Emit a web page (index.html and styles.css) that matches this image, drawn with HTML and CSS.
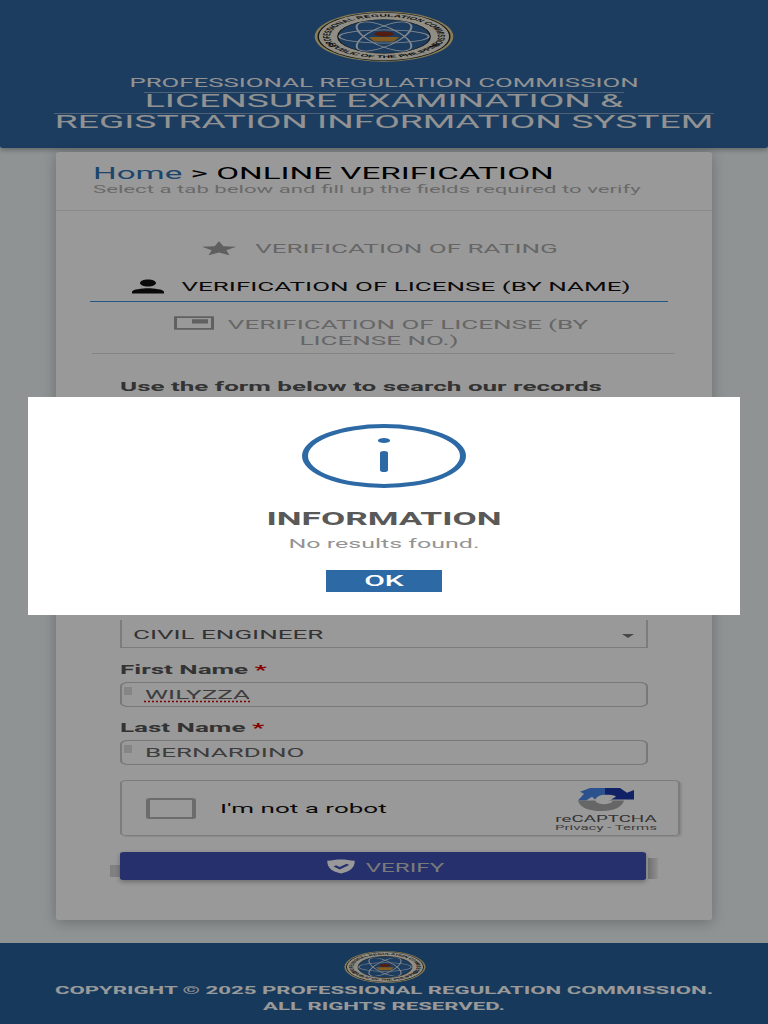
FILE: index.html
```html
<!DOCTYPE html>
<html lang="en">
<head>
<meta charset="utf-8">
<title>LERIS</title>
<link rel="stylesheet" href="styles.css">
</head>
<body>
<svg class="defs" width="0" height="0" aria-hidden="true">
  <defs>
    <symbol id="seal" viewBox="0 0 100 100" preserveAspectRatio="none">
      <circle cx="50" cy="50" r="49.500" fill="#e3cf8c"/>
      <circle cx="50" cy="50" r="47.500" fill="#222"/>
      <circle cx="50" cy="50" r="46.500" fill="#efecdd"/>
      <circle cx="50" cy="50" r="33" fill="#2f66a0" stroke="#222" stroke-width="1"/>
      <path id="sealTop" d="M 16 68 A 38.500 38.500 0 1 1 84 68" fill="none"/>
      <path id="sealBottom" d="M 9 62 A 43 43 0 0 0 91 62" fill="none"/>
      <text class="seal-text"><textPath href="#sealTop" startOffset="50%" text-anchor="middle">PROFESSIONAL REGULATION COMMISSION</textPath></text>
      <text class="seal-text"><textPath href="#sealBottom" startOffset="50%" text-anchor="middle">REPUBLIC OF THE PHILIPPINES</textPath></text>
      <g fill="none" stroke="#dfe6ee" stroke-width="1.400">
        <ellipse cx="50" cy="50" rx="32" ry="13"/>
        <ellipse cx="50" cy="50" rx="32" ry="13" transform="rotate(60 50 50)"/>
        <ellipse cx="50" cy="50" rx="32" ry="13" transform="rotate(-60 50 50)"/>
      </g>
      <ellipse cx="50" cy="45" rx="7" ry="5" fill="#8f2f1c"/>
      <path d="M39 51 h22 l-4 9 h-14 z" fill="#d99a36"/>
    </symbol>
  </defs>
</svg>
<div class="stage">
  <header class="site-header">
    <svg class="seal seal-lg" aria-hidden="true"><use href="#seal"/></svg>
    <p class="agency">PROFESSIONAL REGULATION COMMISSION</p>
    <h1 class="system"><span class="system-line">LICENSURE EXAMINATION &amp;</span> <span class="system-line">REGISTRATION INFORMATION SYSTEM</span></h1>
  </header>

  <main class="card">
    <div class="card-head">
      <h2 class="crumb"><a class="crumb-link">Home</a> &gt; ONLINE VERIFICATION</h2>
      <p class="crumb-sub">Select a tab below and fill up the fields required to verify</p>
    </div>

    <nav class="tabs">
      <div class="tab tab-rating">
        <svg class="tab-star" viewBox="0 0 24 24" preserveAspectRatio="none" aria-hidden="true"><path d="M12 2l3.100 7.300 8.900.7-6.800 5.400 2.200 7.600-7.400-4.200-7.400 4.200 2.200-7.600L0 10l8.900-.7z"/></svg>
        <span>VERIFICATION OF RATING</span>
      </div>
      <div class="tab tab-active">
        <svg class="tab-person" viewBox="0 0 24 24" preserveAspectRatio="none" aria-hidden="true"><path d="M12 12c2.210 0 4-1.790 4-4s-1.790-4-4-4-4 1.790-4 4 1.790 4 4 4zm0 2c-2.670 0-8 1.340-8 4v2h16v-2c0-2.660-5.330-4-8-4z"/></svg>
        <span>VERIFICATION OF LICENSE (BY NAME)</span>
      </div>
      <div class="tab tab-license">
        <span><svg class="tab-card" viewBox="0 0 24 24" preserveAspectRatio="none" aria-hidden="true"><path d="M2 4h20v16H2zM3.500 6v12h17V6zM11 7.500h8v5h-8z" fill-rule="evenodd"/></svg>VERIFICATION OF LICENSE (BY LICENSE NO.)</span>
      </div>
    </nav>

    <form class="form">
      <p class="form-title">Use the form below to search our records</p>
      <div class="select">
        <span>CIVIL ENGINEER</span>
        <i class="select-arrow"></i>
      </div>
      <label class="label">First Name <b class="req">*</b></label>
      <div class="input"><i class="input-icon"></i><span class="misspelt">WILYZZA</span></div>
      <label class="label">Last Name <b class="req">*</b></label>
      <div class="input"><i class="input-icon"></i><span>BERNARDINO</span></div>

      <div class="captcha">
        <i class="captcha-box"></i>
        <span class="captcha-label">I'm not a robot</span>
        <div class="captcha-brand">
          <svg class="captcha-logo" viewBox="0 0 56 24" preserveAspectRatio="none" aria-hidden="true">
            <path d="M0 13 L6 6 L2 4 L12 0 H27 V7 C22 7 19 9 17 12 L14 9 L8 13 Z" fill="#4a88ee"/>
            <path d="M27 0 H42 L49 5 L56 2 V12 H33 L38 9 C36 7 32 7 27 7 Z" fill="#1c3aa9"/>
            <path d="M0 13 H17 C20 18 30 18 35 14 L30 13 H46 C44 20 36 24 24 24 C12 24 2 21 0 13 Z" fill="#ababab"/>
          </svg>
          <span class="captcha-name">reCAPTCHA</span>
          <span class="captcha-links">Privacy - Terms</span>
        </div>
      </div>

      <div class="verify-wrap">
        <button class="verify" type="button">
          <svg class="verify-icon" viewBox="0 0 24 24" preserveAspectRatio="none" aria-hidden="true"><path d="M12 2C8 2 5 3 1 4c0 9 3 15 11 18 8-3 11-9 11-18-4-1-7-2-11-2zM6 12l2-1.800 3 2.600 5.500-4.800 2 1.800-7.500 6.500z" fill-rule="evenodd"/></svg>
          <span class="verify-text">VERIFY</span>
        </button>
      </div>
    </form>
  </main>

  <footer class="site-footer">
    <svg class="seal seal-sm" aria-hidden="true"><use href="#seal"/></svg>
    <p class="copy">COPYRIGHT © 2025 PROFESSIONAL REGULATION COMMISSION. ALL RIGHTS RESERVED.</p>
  </footer>

  <div class="overlay"></div>
  <section class="modal" role="dialog">
    <div class="modal-icon"><i class="modal-dot"></i><i class="modal-stem"></i></div>
    <h3 class="modal-title">INFORMATION</h3>
    <p class="modal-text">No results found.</p>
    <button class="modal-ok" type="button">OK</button>
  </section>
</div>
</body>
</html>
```

FILE: styles.css
```css
* { box-sizing: border-box; }
html, body { margin: 0; padding: 0; overflow: hidden; height: 1024px; background: #eef5f5; }
.defs { display: block; height: 0; }

/* The screenshot is a 384px wide phone page stretched to twice its width. */
.stage {
  position: relative;
  width: 384px;
  height: 1024px;
  overflow: hidden;
  transform: scaleX(2);
  transform-origin: 0 0;
  font-family: Roboto, "Liberation Sans", sans-serif;
  background: #eef5f5;
}

.seal-text { font: 700 7.400px "Liberation Sans", sans-serif; fill: #111; }
.seal { display: block; margin: 0 auto; }
.seal-lg { width: 70px; height: 51px; }
.seal-sm { width: 41px; height: 32px; }

.site-header {
  height: 148px;
  padding-top: 11px;
  background: #2f66a0;
  color: #f4f4f4;
  text-align: center;
  border-radius: 0 0 2px 2px;
  box-shadow: 0 2px 4px rgba(0, 0, 0, .3);
}
.agency { margin: 13px 0 0; font-size: 12.900px; line-height: 15px; font-weight: 400; }
.system { margin: 2px 0 0; font-size: 18.600px; font-weight: 400; }
.system-line {
  display: table;
  margin: 0 auto 3px;
  line-height: 17px;
  border-top: 1px solid rgba(255, 255, 255, .4);
}

.card {
  width: 328px;
  height: 768px;
  margin: 4px 0 0 28px;
  background: #fff;
  border-radius: 2px;
  box-shadow: 0 2px 10px rgba(0, 0, 0, .25);
}
.card-head { height: 59px; padding: 12px 19px 0 18.500px; border-bottom: 1px solid #e4e4e4; }
.crumb { margin: 0; font-size: 16.600px; line-height: 20px; font-weight: 400; color: #000; }
.crumb-link { color: #2f74b5; }
.crumb-sub { margin: 0; font-size: 11.100px; line-height: 12px; color: #b0b0b0; font-weight: 400; }

.tabs { padding-top: 14px; }
.tab {
  display: flex;
  align-items: center;
  justify-content: center;
  font-size: 13px;
  color: #ababab;
  text-align: center;
}
.tab-rating { height: 46px; gap: 9.500px; padding-right: 4px; }
.tab-star { width: 17px; height: 16px; fill: #9e9e9e; flex: none; }
.tab-active {
  height: 31px;
  margin: 0 22.500px 0 16.500px;
  gap: 5px;
  padding-right: 1px;
  color: #111;
  border-bottom: 1px solid #3f8fe0;
}
.tab-person { width: 24px; height: 21px; fill: #111; flex: none; }
.tab-license {
  height: 52px;
  margin: 0 19px 0 18px;
  padding: 7px 28px 0 24px;
  line-height: 16px;
  border-bottom: 1px solid #dcdcdc;
}
.tab-card { width: 24px; height: 20px; fill: #a0a0a0; vertical-align: -4px; margin-right: 5px; }

.form { padding: 0 32.500px 0 32px; }
.form-title { margin: 23px 0 0; font-size: 13px; line-height: 20px; font-weight: 700; color: #555; }
.select {
  position: relative;
  height: 28px;
  margin-top: 223px;
  padding: 7px 5.500px 0;
  font-size: 13px;
  line-height: 16px;
  color: #555;
  border: 1px solid #cfcfcf;
  border-top: 0;
}
.select-arrow {
  position: absolute;
  right: 5.500px;
  top: 14px;
  border: 3.500px solid transparent;
  border-top: 4px solid #777;
  border-bottom: 0;
}
.label { display: block; margin-top: 12.500px; font-size: 13px; line-height: 17px; font-weight: 700; color: #555; }
.req { color: #e00000; }
.input {
  position: relative;
  height: 25px;
  margin-top: 4px;
  padding-left: 11.500px;
  font-size: 13px;
  line-height: 23px;
  color: #666;
  border: 1px solid #c8c8c8;
  border-radius: 4px;
}
.input-icon { position: absolute; left: 1px; top: 4px; width: 4px; height: 8px; background: #dedede; }
.misspelt { text-decoration: underline dotted #d00000; text-underline-offset: 2px; }

.captcha {
  display: flex;
  align-items: center;
  width: 280px;
  height: 56px;
  margin-top: 15px;
  padding: 0 0 0 11.500px;
  border: 1px solid #cfcfcf;
  border-radius: 3px;
  box-shadow: 1px 1px 1px rgba(0, 0, 0, .1);
}
.captcha-box { width: 25px; height: 21px; border: 2px solid #b5b5b5; border-radius: 2px; flex: none; }
.captcha-label { margin-left: 12.500px; font-size: 13px; color: #111; }
.captcha-brand { display: flex; flex-direction: column; align-items: center; margin-left: auto; width: 64px; margin-right: 4px; padding-top: 4px; }
.captcha-logo { width: 28px; height: 23px; }
.captcha-name { font-size: 9.400px; line-height: 11px; color: #555; margin-top: 2px; white-space: nowrap; }
.captcha-links { font-size: 7.500px; line-height: 8px; color: #666; white-space: nowrap; }

.verify-wrap { position: relative; margin-top: 16px; }
.verify-wrap::before {
  content: "";
  position: absolute;
  left: -5px;
  top: 13px;
  width: 5px;
  height: 12px;
  background: #d5d5d5;
}
.verify-wrap::after {
  content: "";
  position: absolute;
  right: -5px;
  top: 6px;
  width: 5px;
  height: 21px;
  background: linear-gradient(to right, #b8b8b8, #f2f2f2);
}
.verify {
  position: relative;
  display: flex;
  align-items: center;
  justify-content: center;
  gap: 5px;
  width: 263px;
  height: 28px;
  padding: 0 0 0 2px;
  border: 0;
  border-radius: 2px;
  background: #3f51b5;
  color: #ccc;
  font: 400 12.100px Roboto, sans-serif;
  box-shadow: 0 2px 4px rgba(0, 0, 0, .3);
}
.verify-text { padding-top: 3px; }
.verify-icon { width: 15px; height: 17px; fill: #fff; }

.site-footer {
  height: 81px;
  margin-top: 23px;
  padding-top: 8px;
  background: #26609a;
  color: #fff;
  text-align: center;
}
.copy { margin: 0; font-size: 11.100px; line-height: 16px; font-weight: 700; padding: 0 24px; }

.overlay { position: absolute; inset: 0; background: rgba(0, 0, 0, .4); }
.modal {
  position: absolute;
  left: 14px;
  top: 397px;
  width: 356px;
  height: 217.500px;
  padding-top: 27px;
  background: #fff;
  text-align: center;
}
.modal-icon {
  display: flex;
  flex-direction: column;
  align-items: center;
  width: 82px;
  height: 64px;
  margin: 0 auto;
  padding-top: 10px;
  border-style: solid;
  border-color: #2d6aa5;
  border-width: 4px 3.500px;
  border-radius: 50%;
}
.modal-dot { width: 6.500px; height: 5px; flex: none; border-radius: 50%; background: #2d6aa5; }
.modal-stem { width: 4px; height: 21px; flex: none; margin-top: 8px; border-radius: 2px; background: #2d6aa5; }
.modal-title { margin: 21px 0 0; font-size: 17.600px; line-height: 20px; font-weight: 700; color: #595959; }
.modal-text { margin: 5px 0 0; font-size: 12.500px; line-height: 20px; color: #949494; }
.modal-ok {
  display: block;
  width: 58px;
  height: 22px;
  margin: 16px auto 0;
  padding: 0;
  border: 0;
  background: #2d6aa5;
  color: #fff;
  font: 500 15px Roboto, sans-serif;
}
```
